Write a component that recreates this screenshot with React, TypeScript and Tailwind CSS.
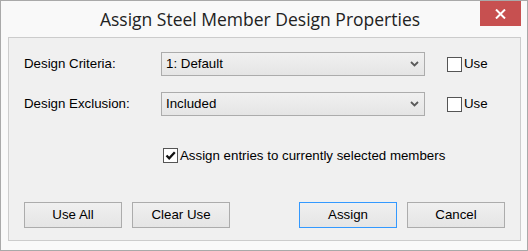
import React from 'react';

const ui = { fontFamily: '"Liberation Sans", Arial, sans-serif' };

function Combo({ value }: { value: string }) {
  return (
    <div className="flex h-[24px] w-[264px] items-center justify-between border border-[#acacac] bg-gradient-to-b from-[#f0f0f0] to-[#e5e5e5] pl-[4px] pr-[5px] text-[13.3px] text-black">
      <span>{value}</span>
      <svg width="9" height="6" viewBox="0 0 9 6">
        <path d="M1 1 L4.5 4.5 L8 1" fill="none" stroke="#5a5a5a" strokeWidth="1.8" />
      </svg>
    </div>
  );
}

function CheckBox({ checked, label }: { checked?: boolean; label: string }) {
  return (
    <label className="flex items-center gap-[2px] text-[13.3px] text-black">
      <span className="flex h-[15px] w-[15px] items-center justify-center border border-[#555555] bg-white">
        {checked && (
          <svg width="13" height="13" viewBox="0 0 13 13">
            <path d="M2.5 6.5 L5.2 9.3 L10.8 3.2" fill="none" stroke="#111" strokeWidth="2.3" />
          </svg>
        )}
      </span>
      <span>{label}</span>
    </label>
  );
}

function Button({ children, isDefault }: { children: React.ReactNode; isDefault?: boolean }) {
  return (
    <button
      className={
        'h-[26px] w-[98px] border bg-gradient-to-b from-[#f0f0f0] to-[#e5e5e5] text-[13.3px] text-black ' +
        (isDefault ? 'border-[#3399ff]' : 'border-[#acacac]')
      }
    >
      {children}
    </button>
  );
}

export default function App() {
  return (
    <div className="flex h-[251px] w-[528px] flex-col border border-[#a9a9a9] bg-[#f9f9f9]" style={ui}>
      {/* Title bar */}
      <div className="relative flex h-[36px] items-center justify-center pr-[8px] pt-[1px]">
        <span className="text-[17.5px] text-[#222222]" style={{ fontFamily: '"Open Sans", "Noto Sans", sans-serif' }}>
          Assign Steel Member Design Properties
        </span>
        <button className="absolute right-[6px] top-0 flex h-[25px] w-[41px] items-center justify-center bg-[#c75050]">
          <svg width="11" height="10" viewBox="0 0 11 10">
            <path d="M1 0.5 L10 9.5 M10 0.5 L1 9.5" stroke="white" strokeWidth="2" />
          </svg>
        </button>
      </div>

      {/* Client area */}
      <div className="ml-[7px] flex h-[204px] w-[513px] flex-col border border-[#cccccc] bg-[#f0f0f0] px-[15px] pb-[12px] pt-[14px]">
        <div className="flex items-center">
          <span className="w-[137px] text-[13.3px] text-black">Design Criteria:</span>
          <Combo value="1: Default" />
          <div className="ml-[22px]">
            <CheckBox label="Use" />
          </div>
        </div>
        <div className="mt-[16px] flex items-center">
          <span className="w-[137px] text-[13.3px] text-black">Design Exclusion:</span>
          <Combo value="Included" />
          <div className="ml-[22px]">
            <CheckBox label="Use" />
          </div>
        </div>
        <div className="mt-[30px] pl-[139px]">
          <CheckBox checked label="Assign entries to currently selected members" />
        </div>
        <div className="flex-1" />
        <div className="flex justify-between">
          <div className="flex gap-[10px]">
            <Button>Use All</Button>
            <Button>Clear Use</Button>
          </div>
          <div className="flex gap-[10px]">
            <Button isDefault>Assign</Button>
            <Button>Cancel</Button>
          </div>
        </div>
      </div>
    </div>
  );
}
